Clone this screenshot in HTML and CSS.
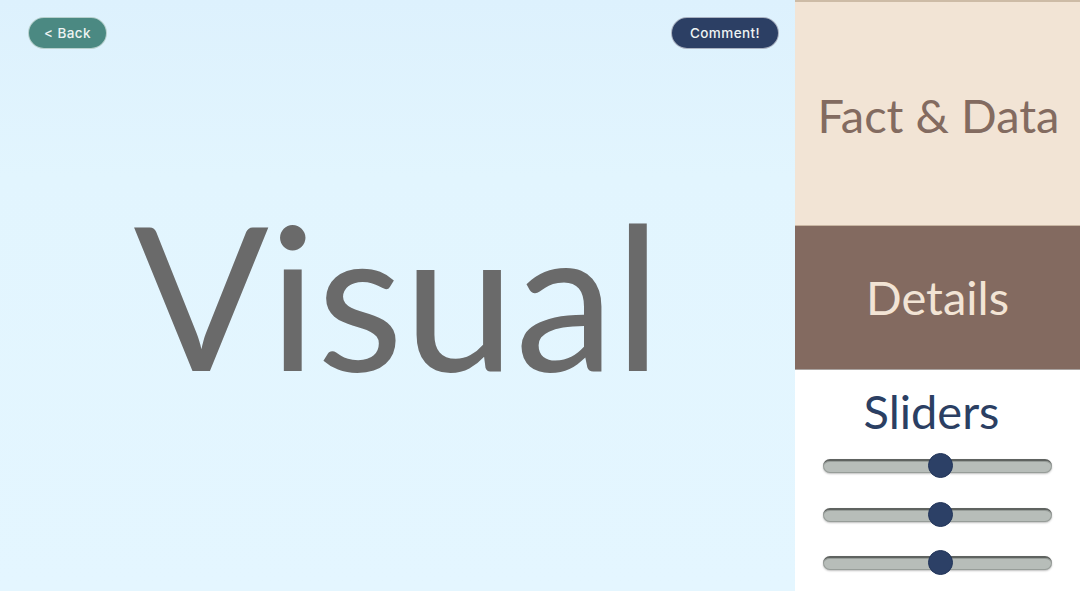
FILE: index.html
```html
<!DOCTYPE html>
<html lang="en">
<head>
<meta charset="utf-8">
<title>Visual</title>
<link rel="stylesheet" href="styles.css">
</head>
<body>
<div class="page">
  <main class="stage">
    <header class="topbar">
      <button class="pill pill-back">&lt; Back</button>
      <button class="pill pill-comment">Comment!</button>
    </header>
    <div class="hero">
      <h1 class="hero-title">Visual</h1>
    </div>
  </main>
  <aside class="side">
    <section class="card card-facts"><span>Fact &amp; Data</span></section>
    <section class="card card-details"><span>Details</span></section>
    <section class="card card-sliders">
      <h2 class="sliders-title">Sliders</h2>
      <div class="slider-list">
        <div class="slider"><div class="track"></div><div class="thumb"></div></div>
        <div class="slider"><div class="track"></div><div class="thumb"></div></div>
        <div class="slider"><div class="track"></div><div class="thumb"></div></div>
      </div>
    </section>
  </aside>
</div>
</body>
</html>
```

FILE: styles.css
```css
* { box-sizing: border-box; }
html, body {
  margin: 0;
  padding: 0;
  width: 1080px;
  height: 591px;
  overflow: hidden;
  font-family: Lato, "Open Sans", sans-serif;
}
.page {
  display: flex;
  width: 1080px;
  height: 591px;
}
.stage {
  width: 795px;
  height: 591px;
  display: flex;
  flex-direction: column;
  background: linear-gradient(180deg, #ddf1fd 0%, #e2f5fe 30%, #e4f6ff 100%);
}
.topbar {
  display: flex;
  justify-content: space-between;
  align-items: center;
  padding: 17px 16px 0 28px;
}
.pill {
  height: 32px;
  border: 1px solid rgba(255,255,255,0.6);
  border-radius: 16px;
  font-family: Inter, "Open Sans", sans-serif;
  font-size: 13.5px;
  letter-spacing: 0.4px;
  font-weight: 500;
  color: #eef3f3;
  padding: 0;
  display: flex;
  align-items: center;
  justify-content: center;
}
.pill-back {
  width: 79px;
  background: #4b8982;
}
.pill-comment {
  width: 108px;
  background: #2c3f64;
}
.hero {
  flex: 1;
  display: flex;
  align-items: center;
  justify-content: center;
  padding-bottom: 52px;
}
.hero-title {
  margin: 0;
  font-family: Lato, sans-serif;
  font-weight: 400;
  font-size: 200px;
  line-height: 1;
  color: #6a6a6a;
}
.side {
  width: 285px;
  display: flex;
  flex-direction: column;
}
.card {
  display: flex;
  align-items: center;
  justify-content: center;
}
.card-facts {
  height: 226px;
  background: #f2e4d5;
  border-top: 2px solid #cdbba6;
  border-bottom: 1px solid #c9b6a3;
  color: #836b60;
  font-size: 47px;
  padding-top: 2px;
  padding-left: 2px;
}
.card-details {
  height: 144px;
  background: #836a60;
  border-bottom: 1px solid #a9a3a0;
  color: #f2e4d5;
  font-size: 47px;
  padding-bottom: 2px;
}
.card-sliders {
  flex: 1;
  background: #ffffff;
  flex-direction: column;
  justify-content: flex-start;
}
.sliders-title {
  margin: 12px 0 0 0;
  font-weight: 400;
  font-size: 47px;
  line-height: 58px;
  color: #2b3f63;
  padding-right: 12px;
}
.slider-list {
  margin-top: 13px;
  display: flex;
  flex-direction: column;
  gap: 23.5px;
}
.slider {
  position: relative;
  width: 229px;
  height: 25px;
  margin-left: 0;
}
.track {
  position: absolute;
  left: 0;
  right: 0;
  top: 6px;
  height: 14px;
  border-radius: 7px;
  background: #b7bdb9;
  border-top: 2px solid #5f6360;
  box-shadow: 0 1px 2px rgba(0,0,0,0.25), inset 0 0 0 1px rgba(120,125,122,0.5);
}
.thumb {
  position: absolute;
  top: 0;
  left: 105px;
  width: 25px;
  height: 25px;
  border-radius: 50%;
  background: #2c4066;
  border: 1px solid #22355a;
}
```
